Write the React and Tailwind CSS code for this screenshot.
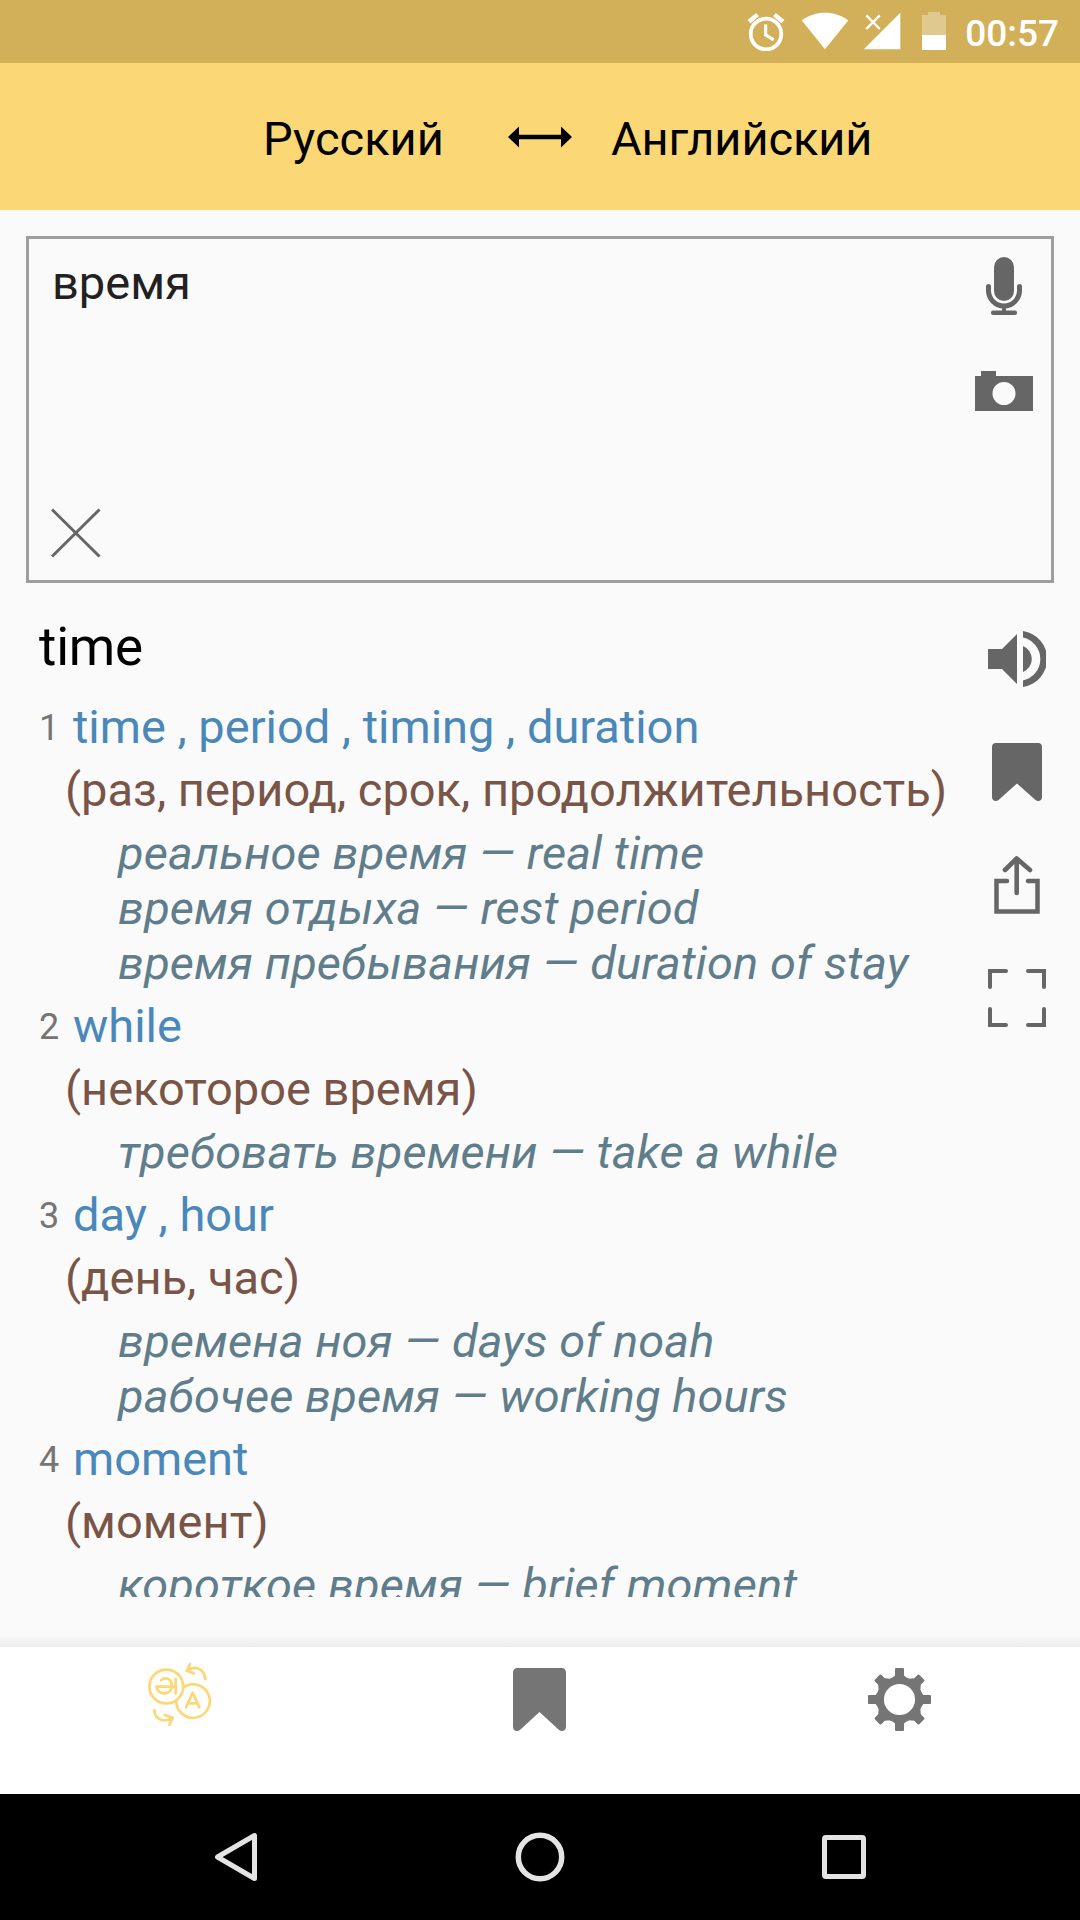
import React from "react";

const ENTRIES = [
  {
    words: "time , period , timing , duration",
    gloss: "(раз, период, срок, продолжительность)",
    examples: [
      "реальное время — real time",
      "время отдыха — rest period",
      "время пребывания — duration of stay",
    ],
  },
  { words: "while", gloss: "(некоторое время)", examples: ["требовать времени — take a while"] },
  {
    words: "day , hour",
    gloss: "(день, час)",
    examples: ["времена ноя — days of noah", "рабочее время — working hours"],
  },
  { words: "moment", gloss: "(момент)", examples: ["короткое время — brief moment"] },
];

function StatusBar() {
  return (
    <div className="flex h-[63px] shrink-0 items-start justify-end bg-[#d2b059] pr-[21px] text-white">
      <svg className="mt-[12px] h-[39px] w-[38px]" viewBox="0 0 38 39" fill="none" stroke="currentColor">
        <circle cx="19" cy="22" r="15.3" strokeWidth="3.8" />
        <path d="M18.6 12.5v10.3l8 5" strokeWidth="3.2" />
        <path d="M2 9.8l8.5-7.2M36 9.8l-8.500-7.200" strokeWidth="4.4" />
      </svg>
      <svg className="ml-[16px] mt-[12px] h-[39px] w-[48px]" viewBox="0 0 48 39" fill="currentColor">
        <path d="M24 37.300L.8 8.400C7.600 3.400 15.500.8 24 .8s16.400 2.600 23.200 7.600z" />
      </svg>
      <svg className="ml-[14px] mt-[12px] h-[39px] w-[39px]" viewBox="0 0 39 39" fill="currentColor">
        <path d="M.8 37.200L37.300.7v36.500z" />
        <path d="M3.300 3.300l13.500 13.700M16.800 3.300L3.300 17" stroke="currentColor" strokeWidth="2.400" />
      </svg>
      <svg className="ml-[20px] mt-[12px] h-[39px] w-[24px]" viewBox="0 0 24 39" fill="currentColor">
        <path d="M0 3h6V0h12v3h6v20H0z" fillOpacity="0.32" />
        <path d="M0 23h24v15H0z" />
      </svg>
      <span className="ml-[19px] mt-[11px] text-[37px] font-medium leading-[45px]">00:57</span>
    </div>
  );
}

function LanguageBar() {
  return (
    <div className="flex h-[147px] shrink-0 bg-[#fcd776] pl-[263px] text-[47px] leading-[56px] text-black">
      <span className="mt-[48px] w-[245px]">Русский</span>
      <svg className="mt-[63px] h-[22px] w-[64px]" viewBox="0 0 64 22">
        <path d="M0 11L11 .5v8.300h42V.5L64 11 53 21.500v-8.300H11v8.300z" />
      </svg>
      <span className="ml-[39px] mt-[48px] tracking-[-0.1px]">Английский</span>
    </div>
  );
}

function InputBox() {
  return (
    <div className="mx-[26px] mt-[26px] flex h-[347px] shrink-0 justify-between border-[3px] border-[#9e9e9e] pl-[22px] pr-[18px] text-[#212121]">
      <div className="flex flex-col justify-between pb-[22px] pt-[16px]">
        <span className="pl-[1px] text-[47px] leading-[56px]">время</span>
        <svg className="h-[50px] w-[50px]" viewBox="0 0 50 50" stroke="#666" strokeWidth="3">
          <path d="M1 1.500l47.500 47M48.500 1.500L1 48.500" />
        </svg>
      </div>
      <div className="flex w-[58px] flex-col items-center pt-[18px]">
        <svg className="h-[58px] w-[36px]" viewBox="0 0 36 58" fill="#666">
          <rect x="8" y="0" width="20" height="44" rx="10" />
          <path d="M2.500 29.500v4a15.500 15.500 0 0 0 31 0v-4" fill="none" stroke="#666" strokeWidth="5" strokeLinecap="round" />
          <path d="M16 50h4v5h-4z" />
          <rect x="5" y="53.500" width="26" height="4.500" rx="2" />
        </svg>
        <svg className="mt-[56px] h-[40px] w-[58px]" viewBox="0 0 58 40" fill="#666">
          <path fillRule="evenodd" d="M0 5h6V0h15v5h37v35H0zM29 11a11.500 11.500 0 1 0 0 23 11.500 11.500 0 0 0 0-23z" />
        </svg>
      </div>
    </div>
  );
}

function Bookmark({ className }) {
  return (
    <svg className={className} viewBox="0 0 50 58" preserveAspectRatio="none" fill="currentColor">
      <path d="M4 0h42a4 4 0 0 1 4 4v50c0 3.800-4 5.200-6.800 2.800L25 40.500 6.800 56.800C4 59.200 0 57.800 0 54V4a4 4 0 0 1 4-4z" />
    </svg>
  );
}

function Actions() {
  return (
    <div className="flex w-[58px] shrink-0 flex-col items-center pt-[48px] text-[#666]">
      <svg className="h-[56px] w-[58px]" viewBox="0 0 58 56" fill="currentColor">
        <path d="M0 18h14L29 3v50L14 38H0z" />
        <path d="M35 15a14 14 0 0 1 0 26z" />
        <path d="M35 0a28.300 28.300 0 0 1 0 56v-6.500a22 22 0 0 0 0-43z" />
      </svg>
      <Bookmark className="mt-[56px] h-[58px] w-[50px]" />
      <svg className="mt-[55px] h-[58px] w-[46px]" viewBox="0 0 46 58" fill="none" stroke="currentColor" strokeLinecap="round">
        <path d="M13 25H2.500v30.500h41V25H34" strokeWidth="4.500" />
        <path d="M22.700 37V2.500M11 14L22.700 2.500 36 14" strokeWidth="4.600" strokeLinejoin="round" />
      </svg>
      <svg className="mt-[55px] h-[58px] w-[58px]" viewBox="0 0 58 58" fill="none" stroke="currentColor" strokeWidth="4" strokeLinecap="round">
        <path d="M18 2H2v16M40 2h16v16M18 56H2V40M40 56h16V40" />
      </svg>
    </div>
  );
}

function Results() {
  return (
    <div className="flex h-[1014px] shrink-0 overflow-hidden pl-[39px] pr-[34px] text-[47px]">
      <div className="grow whitespace-nowrap">
        <h1 className="pt-[32px] text-[53px] leading-[64px] tracking-[-0.2px] text-black">time</h1>
        <ol className="mt-[16px]">
          {ENTRIES.map((entry, index) => (
            <li key={entry.words}>
              <div className="flex h-[63px] leading-[63px]">
                <span className="w-[34px] text-[36px] leading-[67px] text-[#757575]">{index + 1}</span>
                <span className="tracking-[-0.02px] text-[#4a88b9]">{entry.words}</span>
              </div>
              <p className="pl-[26px] leading-[63px] text-[#795548]">{entry.gloss}</p>
              <div className="py-[4px] pl-[79px] italic tracking-[0.09px] text-[#607d8b]">
                {entry.examples.map((example) => (
                  <p key={example} className="leading-[55px]">{example}</p>
                ))}
              </div>
            </li>
          ))}
        </ol>
      </div>
      <Actions />
    </div>
  );
}

function GearIcon() {
  return (
    <svg className="h-[63px] w-[63px]" viewBox="-31.500 -31.500 63 63" fill="#757575">
      <circle r="19.300" fill="none" stroke="#757575" strokeWidth="7.500" />
      {[0, 45, 90, 135, 180, 225, 270, 315].map((angle) => (
        <path
          key={angle}
          transform={`rotate(${angle})`}
          d={angle % 90 === 0 ? "M-7.500-21.500L-4.500-24v-6.500q0-1 1-1h7q1 0 1 1v6.500L7.500-21.500z" : "M-8-21.500L-4.600-25.500v-4.500q0-1.500 1.500-1.500h6.200q1.500 0 1.500 1.500v4.500L8-21.500z"}
        />
      ))}
    </svg>
  );
}

function TabBar() {
  return (
    <>
      <div className="mt-auto h-[12px] shrink-0 bg-gradient-to-b from-[#fafafa] to-[#ececec]" />
      <div className="grid h-[147px] shrink-0 grid-cols-3 justify-items-center bg-white">
        <svg className="mr-[1px] mt-[15px] h-[65px] w-[65px]" viewBox="0 0 65 65" fill="none" stroke="#fcd776" strokeWidth="2.700" strokeLinecap="round" strokeLinejoin="round">
          <circle cx="19.300" cy="24.500" r="16.900" />
          <path d="M37.500 24.500A16.800 16.800 0 1 1 29.200 39" />
          <path d="M39 45.300l6.700-14.600 6.600 14.600M41.300 41.300h9" />
          <path d="M9.500 24.700H28M14 18.300c3.200-3.600 10.700-2.300 10.700 5.400 0 4.800-3 7.600-7.300 7.600-4.400 0-7.400-2.800-7.800-6.600M28.700 16.800v14.700" />
          <path d="M58.300 17C57 6.500 48 3 39.700 8.700M43 2L39.700 8.700 47 11.500" />
          <path d="M7.300 48c.5 9.500 9.500 13.500 18.400 7.800M17.800 53l7.900 2.800-3.400 7" />
        </svg>
        <Bookmark className="mr-[1px] mt-[21px] h-[63px] w-[53px] text-[#757575]" />
        <div className="mr-[1px] mt-[21px]">
          <GearIcon />
        </div>
      </div>
    </>
  );
}

function NavBar() {
  return (
    <div className="flex h-[126px] shrink-0 items-center justify-between bg-black pl-[214px] pr-[214px] text-[#e4e4e4]">
      <svg className="h-[50px] w-[44px]" viewBox="0 0 44 50" fill="none" stroke="currentColor" strokeWidth="5" strokeLinejoin="round">
        <path d="M40.500 3.500v43L3.500 25z" />
      </svg>
      <svg className="h-[50px] w-[50px]" viewBox="0 0 50 50" fill="none" stroke="currentColor" strokeWidth="5.500">
        <circle cx="25" cy="25" r="21.700" />
      </svg>
      <svg className="h-[44px] w-[44px]" viewBox="0 0 44 44" fill="none" stroke="currentColor" strokeWidth="5">
        <rect x="2.500" y="2.500" width="39" height="39" rx="1.500" />
      </svg>
    </div>
  );
}

export default function App() {
  return (
    <div className="flex h-[1920px] w-[1080px] flex-col overflow-hidden bg-[#fafafa] font-['Roboto',sans-serif]">
      <StatusBar />
      <LanguageBar />
      <InputBox />
      <Results />
      <TabBar />
      <NavBar />
    </div>
  );
}
